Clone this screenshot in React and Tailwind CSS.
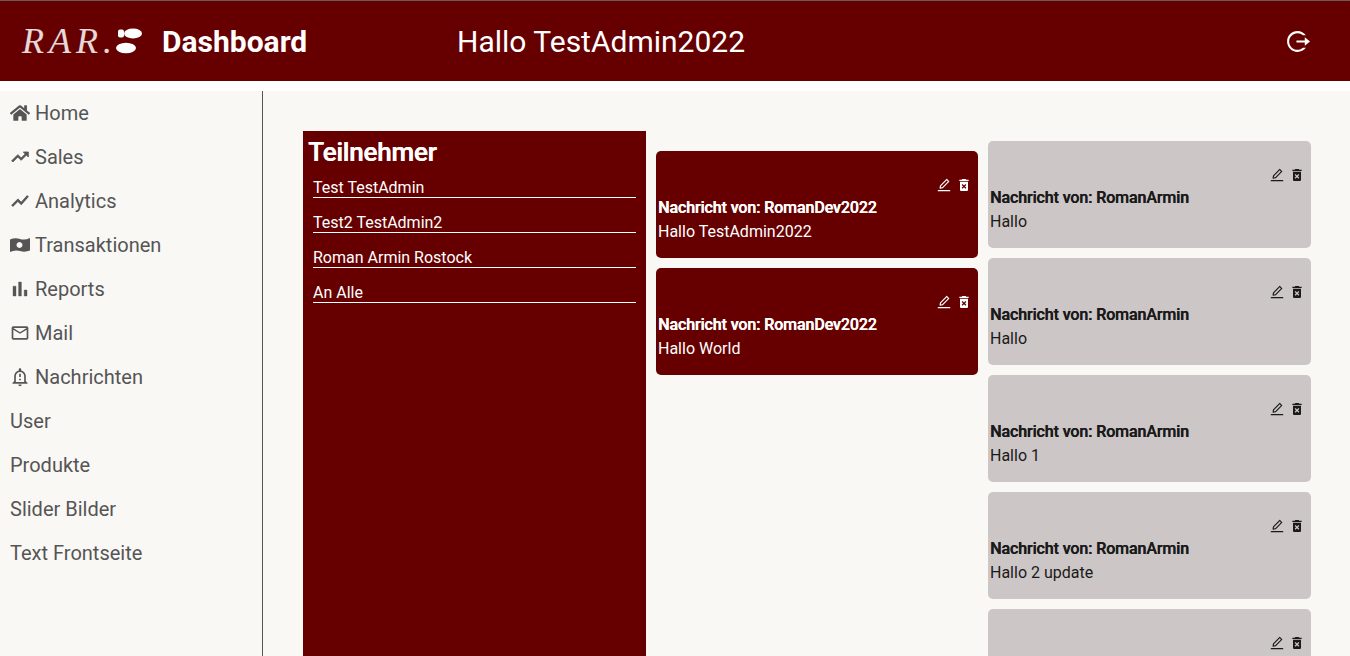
import React from "react";
import { FaHome } from "react-icons/fa";
import { MdOutlineMailOutline, MdOutlineNotificationImportant, MdDeleteForever } from "react-icons/md";
import { AiOutlineEdit } from "react-icons/ai";
import { RiLogoutCircleRLine } from "react-icons/ri";

function Glyph({ d, sw = 1, box = "0 0 24 24" }) {
  return (
    <svg width="20" height="20" viewBox={box} fill="currentColor" stroke="currentColor" strokeWidth={sw} className="shrink-0">
      <path d={d} />
    </svg>
  );
}

function MoneyWave() {
  return (
    <svg width="20" height="20" viewBox="0 0 20 20" fill="currentColor" className="shrink-0">
      <path fillRule="evenodd" d="M0 4.5Q5 2.5 10 4T20 3V15.5Q15 17.5 10 16T0 17ZM9.5 7a3 3 0 1 0 .01 0Z" />
    </svg>
  );
}

const nav = [
  ["Home", <FaHome size={20} />],
  ["Sales", <Glyph d="M16 6l2.29 2.29-4.88 4.88-4-4L2 16.59 3.41 18l6-6 4 4 6.3-6.29L22 12V6z" />],
  ["Analytics", <Glyph d="M3.5 18.49l6-6.01 4 4L22 6.92l-1.41-1.41-7.09 7.97-4-4L2 16.99z" />],
  ["Transaktionen", <MoneyWave />],
  ["Reports", <Glyph d="M5 9.2h3V19H5zM10.6 5h2.8v14h-2.8zm5.6 8H19v6h-2.8z" sw={0.4} box="2 2 20 20" />],
  ["Mail", <MdOutlineMailOutline size={20} />],
  ["Nachrichten", <MdOutlineNotificationImportant size={20} />],
  ["User"],
  ["Produkte"],
  ["Slider Bilder"],
  ["Text Frontseite"],
];
const people = ["Test TestAdmin", "Test2 TestAdmin2", "Roman Armin Rostock", "An Alle"];

function Card({ from, text, dark }) {
  return (
    <div className={`h-[107px] shrink-0 rounded-[5px] px-[2px] pt-[26px] ${dark ? "bg-[#660000] text-white" : "bg-[#cdc6c6] text-[#1a1a1a]"}`}>
      <div className="flex h-[16px] items-center justify-end gap-[4px] pr-[4px]">
        <AiOutlineEdit size={16} />
        <MdDeleteForever size={16} />
      </div>
      {from && (
        <>
          <div className="mt-[3px] text-[16px] leading-[24px] font-medium tracking-[-0.1px] [text-shadow:0.4px_0_0_currentColor]">Nachricht von: {from}</div>
          <div className="text-[16px] leading-[24px]">{text}</div>
        </>
      )}
    </div>
  );
}

export default function App() {
  return (
    <div className="h-[656px] overflow-hidden bg-white font-['Roboto',sans-serif]">
      <header className="flex h-[81px] items-center border-t border-[#6b5a5a] bg-[#660000] text-white">
        <div className="ml-[22px] flex w-[120px] items-center">
          <span className="font-['Liberation_Serif',serif] text-[36px] leading-none tracking-[5px] text-white/85 italic">RAR.</span>
          <svg width="30" height="26" viewBox="0 0 30 26" fill="currentColor" className="-ml-[5px] shrink-0">
            <ellipse cx="21" cy="5.5" rx="9" ry="5" />
            <rect x="6" y="1.5" width="6" height="8" rx="2" />
            <ellipse cx="14" cy="20" rx="10" ry="5.2" />
          </svg>
        </div>
        <div className="ml-[20px] w-[295px] text-[30px] font-bold">Dashboard</div>
        <div className="text-[30px]">Hallo TestAdmin2022</div>
        <div className="mr-[40px] ml-auto">
          <RiLogoutCircleRLine size={25} />
        </div>
      </header>
      <div className="mt-[10px] flex h-[565px] bg-[#faf8f5]">
        <aside className="w-[263px] shrink-0 border-r border-[#555555] pl-[10px] text-[20px] text-[#555555]">
          {nav.map(([label, icon]) => (
            <div key={label} className="flex h-[44px] items-center gap-[5px]">
              {icon}
              <span>{label}</span>
            </div>
          ))}
        </aside>
        <main className="flex min-w-0 flex-1 items-start pr-[39px] pl-[40px]">
          <section className="mt-[40px] h-[600px] w-[343px] shrink-0 bg-[#660000] pt-[5px] pl-[5px] text-white">
            <h2 className="text-[26px] leading-[32px] font-medium tracking-[-0.2px] [text-shadow:0.5px_0_0_currentColor]">Teilnehmer</h2>
            <div className="mt-[6px] pr-[10px] pl-[5px]">
              {people.map((p) => (
                <div key={p} className="mb-[11px] h-[24px] border-b border-white pt-[4px] text-[16px] leading-[20px]">{p}</div>
              ))}
            </div>
          </section>
          <section className="mt-[60px] ml-[10px] flex w-[322px] shrink-0 flex-col gap-[10px]">
            <Card dark from="RomanDev2022" text="Hallo TestAdmin2022" />
            <Card dark from="RomanDev2022" text="Hallo World" />
          </section>
          <section className="mt-[50px] ml-[10px] flex min-w-0 flex-1 flex-col gap-[10px]">
            <Card from="RomanArmin" text="Hallo" />
            <Card from="RomanArmin" text="Hallo" />
            <Card from="RomanArmin" text="Hallo 1" />
            <Card from="RomanArmin" text="Hallo 2 update" />
            <Card />
          </section>
        </main>
      </div>
    </div>
  );
}
